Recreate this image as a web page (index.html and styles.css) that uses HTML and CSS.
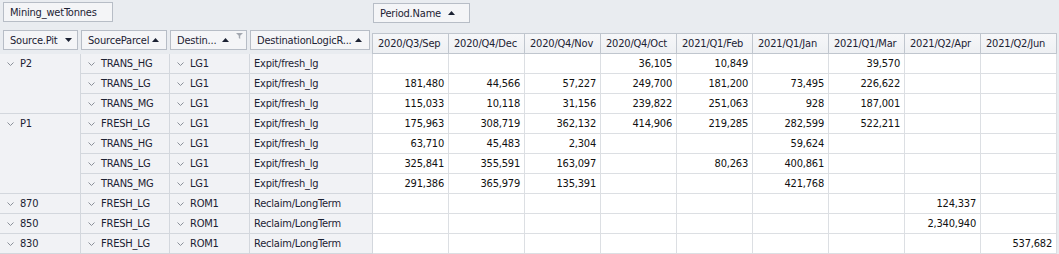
FILE: index.html
```html
<!DOCTYPE html>
<html lang="en">
<head>
    <meta charset="UTF-8" />
    <meta name="viewport" content="width=device-width, initial-scale=1.0"/>
    <title>Pivot Grid - Mining_wetTonnes</title>
    <link rel="stylesheet" href="styles.css">
</head>
<body>

    <div class="pivot">
        <!-- Header: field areas and column headers -->
        <div class="head">
            <div class="head-left">
                <div class="data-area">
                    <div class="field field-data">Mining_wetTonnes</div>
                </div>
                <div class="row-fields">
                    <div class="field f-pit"><span>Source.Pit</span><svg class="sort" width="7" height="4" viewBox="0 0 7 4"><path d="M0 0H7L3.5 4Z"/></svg></div>
                    <div class="field f-parcel"><span>SourceParcel</span><svg class="sort" width="7" height="4" viewBox="0 0 7 4"><path d="M0 4H7L3.5 0Z"/></svg></div>
                    <div class="field f-dest"><span>Destin...</span><svg class="sort" width="7" height="4" viewBox="0 0 7 4"><path d="M0 4H7L3.5 0Z"/></svg><svg class="funnel" width="7" height="6" viewBox="0 0 7 6"><path d="M0 0H7L4.2 2.8V6L2.8 5V2.8Z"/></svg></div>
                    <div class="field f-logic"><span>DestinationLogicR...</span><svg class="sort" width="7" height="4" viewBox="0 0 7 4"><path d="M0 4H7L3.5 0Z"/></svg></div>
                </div>
            </div>
            <div class="head-right">
                <div class="col-area">
                    <div class="field field-period"><span>Period.Name</span><svg class="sort" width="7" height="4" viewBox="0 0 7 4"><path d="M0 4H7L3.5 0Z"/></svg></div>
                </div>
                <div class="col-headers">
                    <div class="ch">2020/Q3/Sep</div>
                    <div class="ch">2020/Q4/Dec</div>
                    <div class="ch">2020/Q4/Nov</div>
                    <div class="ch">2020/Q4/Oct</div>
                    <div class="ch">2021/Q1/Feb</div>
                    <div class="ch">2021/Q1/Jan</div>
                    <div class="ch">2021/Q1/Mar</div>
                    <div class="ch">2021/Q2/Apr</div>
                    <div class="ch">2021/Q2/Jun</div>
                </div>
            </div>
        </div>

        <!-- Body: row headers + data cells -->
        <div class="grid">
            <!-- P2 group -->
            <div class="rh span3"><svg class="chev" width="7" height="4" viewBox="0 0 7 4"><path d="M0.5 0.5L3.5 3.5L6.5 0.5"/></svg><span>P2</span></div>
            <div class="rh"><svg class="chev" width="7" height="4" viewBox="0 0 7 4"><path d="M0.5 0.5L3.5 3.5L6.5 0.5"/></svg><span>TRANS_HG</span></div>
            <div class="rh"><svg class="chev" width="7" height="4" viewBox="0 0 7 4"><path d="M0.5 0.5L3.5 3.5L6.5 0.5"/></svg><span>LG1</span></div>
            <div class="rh plain">Expit/fresh_lg</div>
            <div class="c"></div><div class="c"></div><div class="c"></div><div class="c">36,105</div><div class="c">10,849</div><div class="c"></div><div class="c">39,570</div><div class="c"></div><div class="c"></div>

            <div class="rh"><svg class="chev" width="7" height="4" viewBox="0 0 7 4"><path d="M0.5 0.5L3.5 3.5L6.5 0.5"/></svg><span>TRANS_LG</span></div>
            <div class="rh"><svg class="chev" width="7" height="4" viewBox="0 0 7 4"><path d="M0.5 0.5L3.5 3.5L6.5 0.5"/></svg><span>LG1</span></div>
            <div class="rh plain">Expit/fresh_lg</div>
            <div class="c">181,480</div><div class="c">44,566</div><div class="c">57,227</div><div class="c">249,700</div><div class="c">181,200</div><div class="c">73,495</div><div class="c">226,622</div><div class="c"></div><div class="c"></div>

            <div class="rh"><svg class="chev" width="7" height="4" viewBox="0 0 7 4"><path d="M0.5 0.5L3.5 3.5L6.5 0.5"/></svg><span>TRANS_MG</span></div>
            <div class="rh"><svg class="chev" width="7" height="4" viewBox="0 0 7 4"><path d="M0.5 0.5L3.5 3.5L6.5 0.5"/></svg><span>LG1</span></div>
            <div class="rh plain">Expit/fresh_lg</div>
            <div class="c">115,033</div><div class="c">10,118</div><div class="c">31,156</div><div class="c">239,822</div><div class="c">251,063</div><div class="c">928</div><div class="c">187,001</div><div class="c"></div><div class="c"></div>

            <!-- P1 group -->
            <div class="rh span4"><svg class="chev" width="7" height="4" viewBox="0 0 7 4"><path d="M0.5 0.5L3.5 3.5L6.5 0.5"/></svg><span>P1</span></div>
            <div class="rh"><svg class="chev" width="7" height="4" viewBox="0 0 7 4"><path d="M0.5 0.5L3.5 3.5L6.5 0.5"/></svg><span>FRESH_LG</span></div>
            <div class="rh"><svg class="chev" width="7" height="4" viewBox="0 0 7 4"><path d="M0.5 0.5L3.5 3.5L6.5 0.5"/></svg><span>LG1</span></div>
            <div class="rh plain">Expit/fresh_lg</div>
            <div class="c">175,963</div><div class="c">308,719</div><div class="c">362,132</div><div class="c">414,906</div><div class="c">219,285</div><div class="c">282,599</div><div class="c">522,211</div><div class="c"></div><div class="c"></div>

            <div class="rh"><svg class="chev" width="7" height="4" viewBox="0 0 7 4"><path d="M0.5 0.5L3.5 3.5L6.5 0.5"/></svg><span>TRANS_HG</span></div>
            <div class="rh"><svg class="chev" width="7" height="4" viewBox="0 0 7 4"><path d="M0.5 0.5L3.5 3.5L6.5 0.5"/></svg><span>LG1</span></div>
            <div class="rh plain">Expit/fresh_lg</div>
            <div class="c">63,710</div><div class="c">45,483</div><div class="c">2,304</div><div class="c"></div><div class="c"></div><div class="c">59,624</div><div class="c"></div><div class="c"></div><div class="c"></div>

            <div class="rh"><svg class="chev" width="7" height="4" viewBox="0 0 7 4"><path d="M0.5 0.5L3.5 3.5L6.5 0.5"/></svg><span>TRANS_LG</span></div>
            <div class="rh"><svg class="chev" width="7" height="4" viewBox="0 0 7 4"><path d="M0.5 0.5L3.5 3.5L6.5 0.5"/></svg><span>LG1</span></div>
            <div class="rh plain">Expit/fresh_lg</div>
            <div class="c">325,841</div><div class="c">355,591</div><div class="c">163,097</div><div class="c"></div><div class="c">80,263</div><div class="c">400,861</div><div class="c"></div><div class="c"></div><div class="c"></div>

            <div class="rh"><svg class="chev" width="7" height="4" viewBox="0 0 7 4"><path d="M0.5 0.5L3.5 3.5L6.5 0.5"/></svg><span>TRANS_MG</span></div>
            <div class="rh"><svg class="chev" width="7" height="4" viewBox="0 0 7 4"><path d="M0.5 0.5L3.5 3.5L6.5 0.5"/></svg><span>LG1</span></div>
            <div class="rh plain">Expit/fresh_lg</div>
            <div class="c">291,386</div><div class="c">365,979</div><div class="c">135,391</div><div class="c"></div><div class="c"></div><div class="c">421,768</div><div class="c"></div><div class="c"></div><div class="c"></div>

            <!-- Single-row pits -->
            <div class="rh"><svg class="chev" width="7" height="4" viewBox="0 0 7 4"><path d="M0.5 0.5L3.5 3.5L6.5 0.5"/></svg><span>870</span></div>
            <div class="rh"><svg class="chev" width="7" height="4" viewBox="0 0 7 4"><path d="M0.5 0.5L3.5 3.5L6.5 0.5"/></svg><span>FRESH_LG</span></div>
            <div class="rh"><svg class="chev" width="7" height="4" viewBox="0 0 7 4"><path d="M0.5 0.5L3.5 3.5L6.5 0.5"/></svg><span>ROM1</span></div>
            <div class="rh plain">Reclaim/LongTerm</div>
            <div class="c"></div><div class="c"></div><div class="c"></div><div class="c"></div><div class="c"></div><div class="c"></div><div class="c"></div><div class="c">124,337</div><div class="c"></div>

            <div class="rh"><svg class="chev" width="7" height="4" viewBox="0 0 7 4"><path d="M0.5 0.5L3.5 3.5L6.5 0.5"/></svg><span>850</span></div>
            <div class="rh"><svg class="chev" width="7" height="4" viewBox="0 0 7 4"><path d="M0.5 0.5L3.5 3.5L6.5 0.5"/></svg><span>FRESH_LG</span></div>
            <div class="rh"><svg class="chev" width="7" height="4" viewBox="0 0 7 4"><path d="M0.5 0.5L3.5 3.5L6.5 0.5"/></svg><span>ROM1</span></div>
            <div class="rh plain">Reclaim/LongTerm</div>
            <div class="c"></div><div class="c"></div><div class="c"></div><div class="c"></div><div class="c"></div><div class="c"></div><div class="c"></div><div class="c">2,340,940</div><div class="c"></div>

            <div class="rh"><svg class="chev" width="7" height="4" viewBox="0 0 7 4"><path d="M0.5 0.5L3.5 3.5L6.5 0.5"/></svg><span>830</span></div>
            <div class="rh"><svg class="chev" width="7" height="4" viewBox="0 0 7 4"><path d="M0.5 0.5L3.5 3.5L6.5 0.5"/></svg><span>FRESH_LG</span></div>
            <div class="rh"><svg class="chev" width="7" height="4" viewBox="0 0 7 4"><path d="M0.5 0.5L3.5 3.5L6.5 0.5"/></svg><span>ROM1</span></div>
            <div class="rh plain">Reclaim/LongTerm</div>
            <div class="c"></div><div class="c"></div><div class="c"></div><div class="c"></div><div class="c"></div><div class="c"></div><div class="c"></div><div class="c"></div><div class="c">537,682</div>
        </div>
    </div>

</body>
</html>
```

FILE: styles.css
```css
/* Colours of the grid skin */
:root {
    --bg: #e9ecf0;          /* panel background behind the field areas */
    --field-bg: #f4f5f7;    /* field buttons */
    --field-border: #b7bdc6;
    --head-bg: #f2f4f7;     /* column header cells */
    --head-border: #c0c6ce;
    --row-bg: #f1f2f5;      /* row header cells */
    --row-border: #d3d7dd;
    --cell-border: #dcdfe3;
    --text: #1c2233;
    --icon: #8b9099;
}

* {
    box-sizing: border-box;
}

body {
    margin: 0;
    background: var(--bg);
    font-family: 'DejaVu Sans Condensed', 'Liberation Sans', sans-serif;
    font-size: 11px;
    letter-spacing: -0.2px;
    color: var(--text);
}

.pivot {
    width: 1059px;
}

/* Header: left part holds data + row fields, right part column fields + headers */
.head {
    display: flex;
}

.head-left {
    width: 372px;
}

.data-area {
    padding: 2px 0 0 3px;
    height: 30px;
}

.row-fields {
    display: flex;
    gap: 3px;
    padding-left: 3px;
}

/* Field buttons (draggable pivot fields) */
.field {
    height: 20px;
    display: flex;
    align-items: center;
    padding-left: 6px;
    background: var(--field-bg);
    border: 1px solid var(--field-border);
    white-space: nowrap;
    overflow: hidden;
}

.field-data { width: 110px; }
.f-pit { width: 75px; }
.f-parcel { width: 86px; }
.f-dest { width: 77px; }
.f-logic { width: 120px; }

.row-fields .sort {
    flex: none;
    margin-left: auto;
    margin-right: 7px;
}

.f-pit .sort {
    margin-right: 5px;
}

.sort path {
    fill: #1c2233;
}

.funnel {
    flex: none;
    margin-right: 3px;
    align-self: flex-start;
    margin-top: 2px;
}

.funnel path {
    fill: #a3a8b0;
}

.head-right {
    flex: 1;
}

.col-area {
    padding: 3px 0 0 1px;
    height: 33px;
}

.field-period {
    width: 97px;
}

.field-period .sort {
    margin-left: 7px;
}

/* Column header cells */
.col-headers {
    display: flex;
    border-left: 1px solid var(--head-border);
}

.ch {
    width: 76px;
    height: 21px;
    line-height: 19px;
    padding-left: 5px;
    background: linear-gradient(#f6f7f9, #eef0f3);
    border-top: 1px solid var(--head-border);
    border-right: 1px solid var(--head-border);
    border-bottom: 1px solid var(--head-border);
    white-space: nowrap;
    overflow: hidden;
}

/* Body grid: 4 row-header columns then 9 period columns */
.grid {
    display: grid;
    grid-template-columns: 81px 89px 80px 123px repeat(9, 76px);
    grid-auto-rows: 20px;
}

.rh {
    display: flex;
    align-items: flex-start;
    line-height: 19px;
    background: var(--row-bg);
    border-right: 1px solid var(--row-border);
    border-bottom: 1px solid var(--row-border);
    white-space: nowrap;
    overflow: hidden;
}

.rh.plain {
    padding-left: 4px;
}

.span3 { grid-row: span 3; }
.span4 { grid-row: span 4; }

.chev {
    flex: none;
    margin: 8px 6px 0 7px;
}

.chev path {
    fill: none;
    stroke: var(--icon);
    stroke-width: 1;
}

/* Data cells */
.c {
    background: #fff;
    text-align: right;
    padding-right: 4px;
    line-height: 19px;
    color: #111;
    border-right: 1px solid var(--cell-border);
    border-bottom: 1px solid var(--cell-border);
    white-space: nowrap;
}
```
